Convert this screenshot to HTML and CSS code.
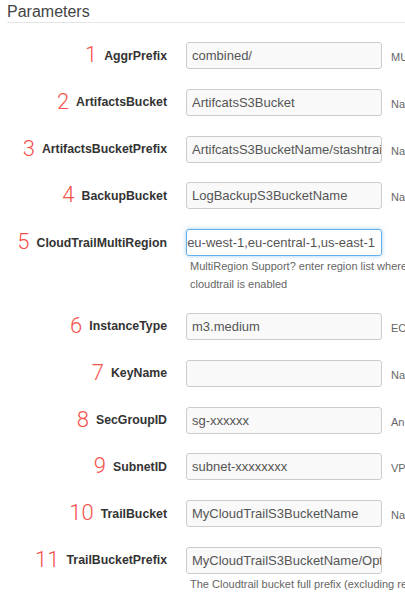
FILE: index.html
```html
<!DOCTYPE html>
<html>
<head>
<meta charset="utf-8">
<link rel="stylesheet" href="styles.css">
</head>
<body>
<div class="panel">
  <h2 class="title">Parameters</h2>
  <div class="rows">
    <div class="row">
      <div class="label"><span class="num">1</span><span class="name">AggrPrefix</span></div>
      <div class="field"><div class="input">combined/</div></div>
      <div class="desc">MUST end with a slash</div>
    </div>
    <div class="row">
      <div class="label"><span class="num">2</span><span class="name">ArtifactsBucket</span></div>
      <div class="field"><div class="input">ArtifcatsS3Bucket</div></div>
      <div class="desc">Name of the artifacts bucket</div>
    </div>
    <div class="row">
      <div class="label"><span class="num">3</span><span class="name">ArtifactsBucketPrefix</span></div>
      <div class="field"><div class="input">ArtifcatsS3BucketName/stashtrail/</div></div>
      <div class="desc">Name of the artifacts prefix</div>
    </div>
    <div class="row">
      <div class="label"><span class="num">4</span><span class="name">BackupBucket</span></div>
      <div class="field"><div class="input">LogBackupS3BucketName</div></div>
      <div class="desc">Name of the backup bucket</div>
    </div>
    <div class="row">
      <div class="label"><span class="num">5</span><span class="name">CloudTrailMultiRegion</span></div>
      <div class="field">
        <div class="input focused"><span>us-west-2,eu-west-1,eu-central-1,us-east-1</span></div>
        <div class="help">MultiRegion Support? enter region list where cloudtrail is enabled</div>
      </div>
      <div class="desc"></div>
    </div>
    <div class="row">
      <div class="label"><span class="num">6</span><span class="name">InstanceType</span></div>
      <div class="field"><div class="input">m3.medium</div></div>
      <div class="desc">EC2 instance type</div>
    </div>
    <div class="row">
      <div class="label"><span class="num">7</span><span class="name">KeyName</span></div>
      <div class="field"><div class="input"></div></div>
      <div class="desc">Name of an existing EC2 KeyPair</div>
    </div>
    <div class="row">
      <div class="label"><span class="num">8</span><span class="name">SecGroupID</span></div>
      <div class="field"><div class="input">sg-xxxxxx</div></div>
      <div class="desc">An existing security group</div>
    </div>
    <div class="row">
      <div class="label"><span class="num">9</span><span class="name">SubnetID</span></div>
      <div class="field"><div class="input">subnet-xxxxxxxx</div></div>
      <div class="desc">VPC subnet</div>
    </div>
    <div class="row">
      <div class="label"><span class="num">10</span><span class="name">TrailBucket</span></div>
      <div class="field"><div class="input">MyCloudTrailS3BucketName</div></div>
      <div class="desc">Name of the CloudTrail bucket</div>
    </div>
    <div class="row">
      <div class="label"><span class="num">11</span><span class="name">TrailBucketPrefix</span></div>
      <div class="field">
        <div class="input">MyCloudTrailS3BucketName/Optional</div>
        <div class="help nowrap">The Cloudtrail bucket full prefix (excluding region and AWSLogs)</div>
      </div>
      <div class="desc"></div>
    </div>
  </div>
</div>
</body>
</html>
```
FILE: styles.css
```css
html, body {
  margin: 0;
  padding: 0;
  background: #ffffff;
  overflow: hidden;
}

body {
  font-family: "Liberation Sans", Arial, sans-serif;
  color: #333333;
}

.panel {
  margin-left: 7px;
  width: 600px;
}

.title {
  margin: 0;
  padding: 3px 0 1px 0;
  font-size: 16px;
  line-height: 18px;
  font-weight: normal;
  color: #444444;
  border-bottom: 1px solid #e5e5e5;
}

.rows {
  display: flex;
  flex-direction: column;
  padding-top: 19px;
}

.row {
  display: flex;
  align-items: flex-start;
  margin-bottom: 19.8px;
}

.label {
  width: 160px;
  height: 27px;
  display: flex;
  justify-content: flex-end;
  align-items: center;
  white-space: nowrap;
}

.num {
  font-family: Roboto, "Liberation Sans", sans-serif;
  font-weight: 300;
  font-size: 22px;
  line-height: 22px;
  padding-bottom: 1px;
  color: #f5524b;
  margin-right: 7px;
}

.name {
  font-weight: bold;
  font-size: 12.3px;
  line-height: 14px;
  color: #333333;
}

.field {
  margin-left: 19px;
  width: 196px;
  flex: none;
}

.input {
  box-sizing: border-box;
  width: 196px;
  height: 27px;
  border: 1px solid #cccccc;
  border-radius: 3px;
  background: #f9f9f9;
  padding: 0 5px;
  font-size: 13px;
  line-height: 25px;
  color: #555555;
  white-space: nowrap;
  overflow: hidden;
}

.input.focused {
  background: #ffffff;
  border-color: #66afe9;
  box-shadow: 0 0 4px rgba(102, 175, 233, 0.6);
  display: flex;
  justify-content: flex-end;
  padding: 0 6px 0 0;
}

.input.focused span {
  flex: none;
}

.help {
  width: 245px;
  padding: 1px 0 0 4px;
  font-size: 11px;
  line-height: 18px;
  color: #666666;
}

.help.nowrap {
  white-space: nowrap;
}

.desc {
  margin-left: 9px;
  height: 27px;
  padding-top: 2px;
  box-sizing: border-box;
  font-size: 11px;
  line-height: 27px;
  color: #666666;
  white-space: nowrap;
}
```
